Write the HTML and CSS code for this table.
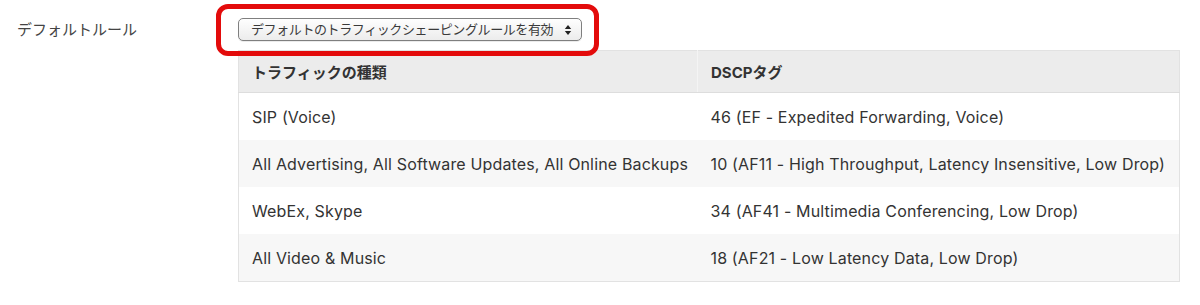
FILE: index.html
```html
<!DOCTYPE html>
<html lang="ja">
<head>
<meta charset="utf-8">
<title>デフォルトルール</title>
<link rel="stylesheet" href="styles.css">
</head>
<body>
<div class="setting-row">
  <div class="setting-label">デフォルトルール</div>
  <div class="setting-content">
    <div class="select-wrap">
      <div class="select-box">
        <span class="select-text">デフォルトのトラフィックシェーピングルールを有効</span>
        <svg class="select-arrows" width="8" height="12" viewBox="0 0 8 12" aria-hidden="true">
          <path d="M4 1 L7.2 5 L0.8 5 Z" fill="#222"/>
          <path d="M4 11 L7.2 7 L0.8 7 Z" fill="#222"/>
        </svg>
      </div>
      <div class="highlight"></div>
    </div>
    <table class="rules">
      <thead>
        <tr><th class="col-type">トラフィックの種類</th><th class="col-dscp">DSCPタグ</th></tr>
      </thead>
      <tbody>
        <tr><td>SIP (Voice)</td><td>46 (EF - Expedited Forwarding, Voice)</td></tr>
        <tr><td>All Advertising, All Software Updates, All Online Backups</td><td>10 (AF11 - High Throughput, Latency Insensitive, Low Drop)</td></tr>
        <tr><td>WebEx, Skype</td><td>34 (AF41 - Multimedia Conferencing, Low Drop)</td></tr>
        <tr><td>All Video &amp; Music</td><td>18 (AF21 - Low Latency Data, Low Drop)</td></tr>
      </tbody>
    </table>
  </div>
</div>
</body>
</html>
```

FILE: styles.css
```css
html, body {
  margin: 0;
  padding: 0;
  background: #ffffff;
}

body {
  font-family: "Inter", "Noto Sans CJK JP", sans-serif;
  color: #333333;
}

.setting-row {
  display: flex;
  padding-top: 18px;
}

.setting-label {
  width: 221px;
  padding-left: 17px;
  font-size: 15px;
  line-height: 23px;
  color: #444444;
}

.setting-content {
  display: flex;
  flex-direction: column;
  gap: 9px;
}

.select-wrap {
  position: relative;
  width: 344px;
}

.select-box {
  box-sizing: border-box;
  height: 23px;
  display: flex;
  align-items: center;
  padding: 0 9px 0 12px;
  border: 1px solid #7f7f7f;
  border-radius: 5px;
  background: linear-gradient(#fefefe, #ececec);
  box-shadow: 0 1px 0 rgba(0, 0, 0, 0.08);
}

.select-text {
  flex: 1;
  white-space: nowrap;
  font-size: 13px;
  letter-spacing: -0.4px;
  color: #3a3a3a;
  line-height: 1;
}

.select-arrows {
  display: block;
  flex: none;
}

.highlight {
  position: absolute;
  left: -22px;
  right: -17px;
  top: -14px;
  bottom: -15px;
  border: 5px solid #e30b0b;
  border-radius: 12px;
  pointer-events: none;
}

.rules {
  width: 942px;
  table-layout: fixed;
  border-collapse: collapse;
  border: 1px solid #e2e2e2;
  font-size: 16px;
  letter-spacing: 0.15px;
  color: #333333;
}

.rules th {
  background: #ececec;
  font-size: 15px;
  letter-spacing: 0;
  font-weight: 700;
  text-align: left;
  height: 41px;
  padding: 0 13px;
  border-bottom: 1px solid #dddddd;
}

.rules th.col-type {
  width: 432px;
}

.rules th.col-dscp {
  border-left: 1px solid #f4f4f4;
}

.rules td {
  height: 47px;
  padding: 0 13px;
  white-space: nowrap;
}

.rules tbody tr:nth-child(even) td {
  background: #f7f7f7;
}
```
